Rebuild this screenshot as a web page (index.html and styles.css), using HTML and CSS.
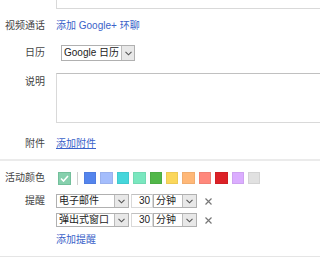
FILE: index.html
```html
<!DOCTYPE html>
<html lang="zh-CN">
<head>
  <meta charset="UTF-8">
  <meta name="viewport" content="width=device-width, initial-scale=1.0">
  <title>活动详情</title>
  <link rel="stylesheet" href="styles.css">
</head>
<body>

  <div class="form">
    <div class="row row-where">
      <label class="label">地点</label>
      <div class="field"><input class="textbox" type="text"></div>
    </div>

    <div class="row row-video">
      <span class="label">视频通话</span>
      <div class="field"><a class="link" href="#">添加 Google+ 环聊</a></div>
    </div>

    <div class="row row-calendar">
      <span class="label">日历</span>
      <div class="field">
        <div class="select select-calendar">
          <span class="select-text">Google 日历</span>
          <span class="select-arrow"><svg width="7" height="5" viewBox="0 0 7 5"><path d="M0.5 0.8 L3.5 3.8 L6.5 0.8" fill="none" stroke="#555" stroke-width="1.1"/></svg></span>
        </div>
      </div>
    </div>

    <div class="row row-desc">
      <span class="label">说明</span>
      <div class="field"><textarea class="textarea"></textarea></div>
    </div>

    <div class="row row-attach">
      <span class="label">附件</span>
      <div class="field"><a class="link link-underline" href="#">添加附件</a></div>
    </div>

    <div class="divider"></div>

    <div class="row row-color">
      <span class="label">活动颜色</span>
      <div class="field swatches">
        <span class="swatch swatch-checked">
          <svg width="9" height="7" viewBox="0 0 9 7"><path d="M1 3.5 L3.5 6 L8 1" fill="none" stroke="#fff" stroke-width="1.6"/></svg>
        </span>
        <span class="swatch-sep"></span>
        <span class="swatch" style="background:#5484ed"></span>
        <span class="swatch" style="background:#a4bdfc"></span>
        <span class="swatch" style="background:#46d6db"></span>
        <span class="swatch" style="background:#7ae7bf"></span>
        <span class="swatch" style="background:#51b749"></span>
        <span class="swatch" style="background:#fbd75b"></span>
        <span class="swatch" style="background:#ffb878"></span>
        <span class="swatch" style="background:#ff887c"></span>
        <span class="swatch" style="background:#dc2127"></span>
        <span class="swatch" style="background:#dbadff"></span>
        <span class="swatch" style="background:#e1e1e1"></span>
      </div>
    </div>

    <div class="row row-remind">
      <span class="label">提醒</span>
      <div class="field reminders">
        <div class="reminder">
          <div class="select select-method">
            <span class="select-text">电子邮件</span>
            <span class="select-arrow"><svg width="7" height="5" viewBox="0 0 7 5"><path d="M0.5 0.8 L3.5 3.8 L6.5 0.8" fill="none" stroke="#555" stroke-width="1.1"/></svg></span>
          </div>
          <span class="number">30</span>
          <div class="select select-unit">
            <span class="select-text">分钟</span>
            <span class="select-arrow"><svg width="7" height="5" viewBox="0 0 7 5"><path d="M0.5 0.8 L3.5 3.8 L6.5 0.8" fill="none" stroke="#555" stroke-width="1.1"/></svg></span>
          </div>
          <span class="remove"><svg width="7" height="7" viewBox="0 0 7 7"><path d="M0.5 0.5 L6.5 6.5 M6.5 0.5 L0.5 6.5" stroke="#777" stroke-width="1.2"/></svg></span>
        </div>
        <div class="reminder">
          <div class="select select-method">
            <span class="select-text">弹出式窗口</span>
            <span class="select-arrow"><svg width="7" height="5" viewBox="0 0 7 5"><path d="M0.5 0.8 L3.5 3.8 L6.5 0.8" fill="none" stroke="#555" stroke-width="1.1"/></svg></span>
          </div>
          <span class="number">30</span>
          <div class="select select-unit">
            <span class="select-text">分钟</span>
            <span class="select-arrow"><svg width="7" height="5" viewBox="0 0 7 5"><path d="M0.5 0.8 L3.5 3.8 L6.5 0.8" fill="none" stroke="#555" stroke-width="1.1"/></svg></span>
          </div>
          <span class="remove"><svg width="7" height="7" viewBox="0 0 7 7"><path d="M0.5 0.5 L6.5 6.5 M6.5 0.5 L0.5 6.5" stroke="#777" stroke-width="1.2"/></svg></span>
        </div>
      </div>
    </div>

    <div class="row row-add">
      <span class="label"></span>
      <div class="field"><a class="link" href="#">添加提醒</a></div>
    </div>

    <div class="bottom-line"></div>
  </div>

</body>
</html>
```

FILE: styles.css
```css
html, body {
  overflow: hidden;
}

body {
  margin: 0;
  background-color: white;
  font-family: "Liberation Sans", Arial, "Noto Sans CJK SC", sans-serif;
  font-size: 10px;
  line-height: 14px;
  color: #444;
}

.form {
  width: 320px;
}

.row {
  display: flex;
  align-items: center;
}

.label {
  width: 45px;
  flex: none;
  text-align: right;
  white-space: nowrap;
}

.field {
  margin-left: 11px;
  display: flex;
  align-items: center;
}

.link {
  color: #3a62c9;
  text-decoration: none;
  white-space: nowrap;
}

.link-underline {
  text-decoration: underline;
}

/* text inputs run off the right edge */
.textbox,
.textarea {
  box-sizing: border-box;
  width: 290px;
  margin: 0;
  padding: 0;
  border: 1px solid #d9d9d9;
  border-top-color: #c0c0c0;
  background: white;
  font: inherit;
  resize: none;
}

.row-where {
  margin-top: -11px;
  height: 20px;
}

.row-where .label {
  align-self: flex-start;
  margin-top: 0;
}

.textbox {
  height: 20px;
}

.row-video {
  margin-top: 8px;
  height: 18px;
}

.row-calendar {
  margin-top: 10px;
  height: 16px;
}

.row-calendar .field {
  margin-left: 16px;
}

.row-desc {
  margin-top: 12px;
  align-items: flex-start;
}

.row-desc .label {
  padding-top: 2px;
}

.textarea {
  height: 50px;
  display: block;
}

.row-attach {
  margin-top: 13px;
  height: 16px;
}

.divider {
  margin-top: 7px;
  height: 2px;
  background: #ebebeb;
}

/* selects */
.select {
  box-sizing: border-box;
  display: flex;
  align-items: stretch;
  border: 1px solid #b0b0b0;
  background: white;
  color: #222;
}

.select-text {
  flex: 1;
  padding-left: 2px;
  white-space: nowrap;
  overflow: hidden;
}

.select-arrow {
  width: 13px;
  flex: none;
  display: flex;
  align-items: center;
  justify-content: center;
  background: #e8e8e8;
  border-left: 1px solid #bbb;
}

.select-calendar {
  width: 74px;
  height: 16px;
}

.select-calendar .select-arrow {
  width: 12px;
}

.select-method {
  width: 73px;
  height: 14px;
  line-height: 12px;
}

.select-unit {
  width: 44px;
  height: 14px;
  line-height: 12px;
}

.number {
  box-sizing: border-box;
  width: 22px;
  height: 14px;
  line-height: 12px;
  margin-left: 2px;
  padding-right: 2px;
  border: 1px solid #d9d9d9;
  border-top-color: #c0c0c0;
  text-align: right;
  color: #222;
}

.remove {
  margin-left: 8px;
  display: flex;
}

.row-color {
  margin-top: 10px;
  height: 14px;
}

.swatches {
  margin-left: 13px;
  gap: 4px;
}

.swatch {
  box-sizing: border-box;
  width: 12.4px;
  height: 12px;
  border: 1px solid rgba(0, 0, 0, 0.06);
}

.swatch-checked {
  width: 13px;
  height: 13px;
  background: #86d0ad;
  border-color: #73bf9b;
  display: flex;
  align-items: center;
  justify-content: center;
}

.swatch-sep {
  width: 1px;
  height: 13px;
  background: #cfcfcf;
  margin: 0 2px;
}

.row-remind {
  margin-top: 9px;
  align-items: flex-start;
}

.reminders {
  flex-direction: column;
  align-items: flex-start;
  gap: 5px;
}

.reminder {
  display: flex;
  align-items: center;
}

.row-add {
  margin-top: 6px;
  height: 14px;
}

.bottom-line {
  margin-top: 9px;
  height: 1px;
  background: #e5e5e5;
}
```
